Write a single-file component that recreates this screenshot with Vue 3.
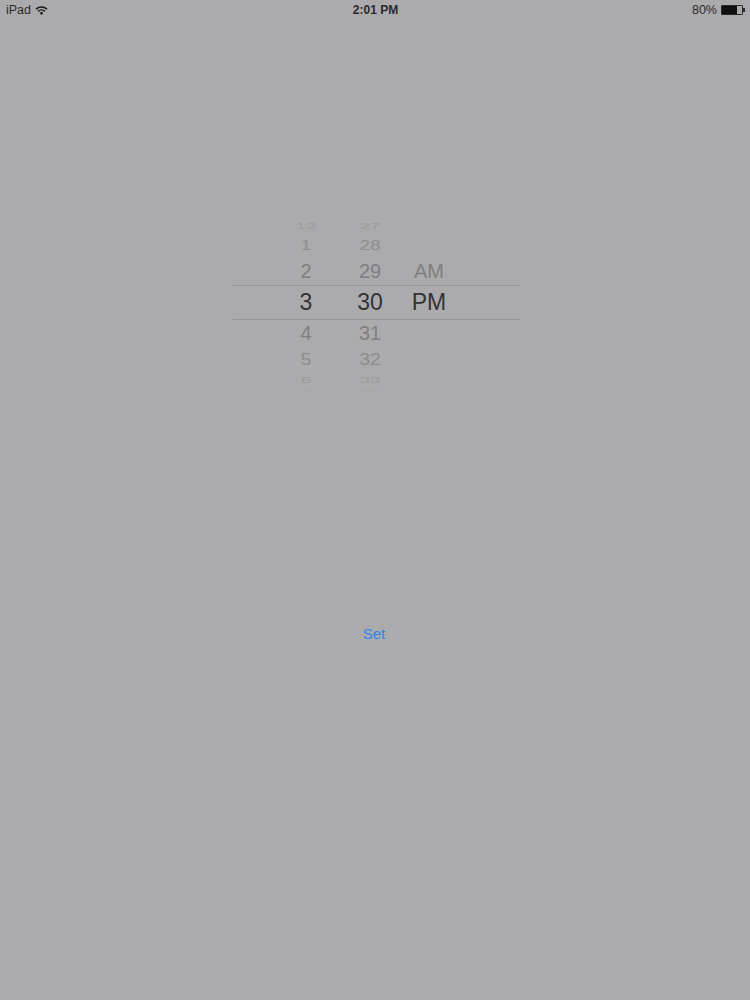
<template>
  <div class="screen">
    <div class="status-bar">
      <div class="status-left">
        <span>iPad</span>
        <svg class="wifi" viewBox="0 0 14 11" width="13" height="11">
          <path d="M1 4.2a8.6 8.6 0 0 1 12 0" fill="none" stroke="#1c1c1c" stroke-width="1.7" />
          <path d="M3.3 6.5a5.3 5.3 0 0 1 7.4 0" fill="none" stroke="#1c1c1c" stroke-width="1.7" />
          <path d="M5 8.2a2.8 2.8 0 0 1 4 0L7 10.4z" fill="#1c1c1c" />
        </svg>
      </div>
      <div class="status-time">2:01 PM</div>
      <div class="status-right">
        <span>80%</span>
        <div class="battery">
          <div class="battery-level"></div>
        </div>
        <div class="battery-tip"></div>
      </div>
    </div>

    <div class="picker">
      <div class="column hours">
        <div
          v-for="(item, index) in hours"
          :key="item"
          class="item"
          :class="rows[index]"
        >
          <span>{{ item }}</span>
        </div>
      </div>
      <div class="column minutes">
        <div
          v-for="(item, index) in minutes"
          :key="item"
          class="item"
          :class="rows[index]"
        >
          <span>{{ item }}</span>
        </div>
      </div>
      <div class="column period">
        <div class="item r1"></div>
        <div class="item r2"></div>
        <div class="item r3"><span>AM</span></div>
        <div class="item r4"><span>PM</span></div>
      </div>
      <div class="selection"></div>
    </div>

    <div class="actions">
      <button class="set-btn">Set</button>
    </div>
  </div>
</template>

<script setup>
const hours = ["12", "1", "2", "3", "4", "5", "6", "7"];
const minutes = ["27", "28", "29", "30", "31", "32", "33", "34"];

// Wheel rows, squeezed more the further they are from the middle
const rows = ["r1", "r2", "r3", "r4", "r5", "r6", "r7", "r8"];
</script>

<style>
html,
body {
  background: #abaaac;
}
</style>

<style scoped>
.screen {
  width: 750px;
  height: 1000px;
  background: #abaaac;
  font-family: "Liberation Sans", Arial, sans-serif;
  overflow: hidden;
}

.status-bar {
  height: 20px;
  display: grid;
  grid-template-columns: 1fr auto 1fr;
  align-items: center;
  padding: 0 5px 0 6px;
  font-size: 12.5px;
  color: #2b2b2c;
}

.status-left {
  display: flex;
  align-items: center;
  gap: 4px;
}

.status-time {
  font-weight: 700;
  font-size: 12px;
}

.status-right {
  display: flex;
  align-items: center;
  justify-content: flex-end;
}

.status-right span {
  margin-right: 4px;
}

.battery {
  width: 22px;
  height: 10px;
  border: 1px solid #2b2b2c;
  border-radius: 1px;
  box-sizing: border-box;
}

.battery-level {
  width: 75%;
  height: 100%;
  background: #111;
}

.battery-tip {
  width: 2px;
  height: 4px;
  background: #2b2b2c;
}

.picker {
  position: relative;
  width: 287px;
  height: 176px;
  margin: 198px 0 0 233px;
  display: flex;
}

.column {
  display: flex;
  flex-direction: column;
  width: 40px;
}

.hours {
  margin-left: 53px;
}

.minutes {
  margin-left: 24px;
}

.period {
  margin-left: 19px;
}

.item {
  display: flex;
  align-items: center;
  justify-content: center;
  overflow: hidden;
  font-size: 20px;
  color: #807f82;
}

.item span {
  display: block;
  white-space: nowrap;
}

.r1 {
  height: 16px;
  font-size: 19px;
  color: #9c9b9e;
}
.r1 span {
  transform: scaleY(0.5);
}

.r2 {
  height: 22px;
  font-size: 19px;
  color: #8f8e91;
}
.r2 span {
  transform: scaleY(0.78);
}

.r3 {
  height: 30px;
}

.r4 {
  height: 33px;
  font-size: 23px;
  color: #333335;
}

.r5 {
  height: 29px;
}

.r6 {
  height: 24px;
  font-size: 19px;
  color: #8c8b8e;
}
.r6 span {
  transform: scaleY(0.82);
}

.r7 {
  height: 15px;
  font-size: 19px;
  color: #9c9b9e;
}
.r7 span {
  transform: scaleY(0.5);
}

.r8 {
  height: 7px;
  font-size: 17px;
  color: #a6a5a7;
}
.r8 span {
  transform: scaleY(0.25);
}

.selection {
  position: absolute;
  left: 0;
  right: 0;
  top: 67px;
  height: 33px;
  border-top: 1px solid #98979a;
  border-bottom: 1px solid #98979a;
  pointer-events: none;
}

.actions {
  display: flex;
  justify-content: center;
  margin-top: 231px;
  padding-right: 2px;
}

.set-btn {
  border: none;
  background: none;
  padding: 0;
  font: inherit;
  font-size: 15px;
  line-height: 18px;
  color: #2f85e4;
}
</style>
